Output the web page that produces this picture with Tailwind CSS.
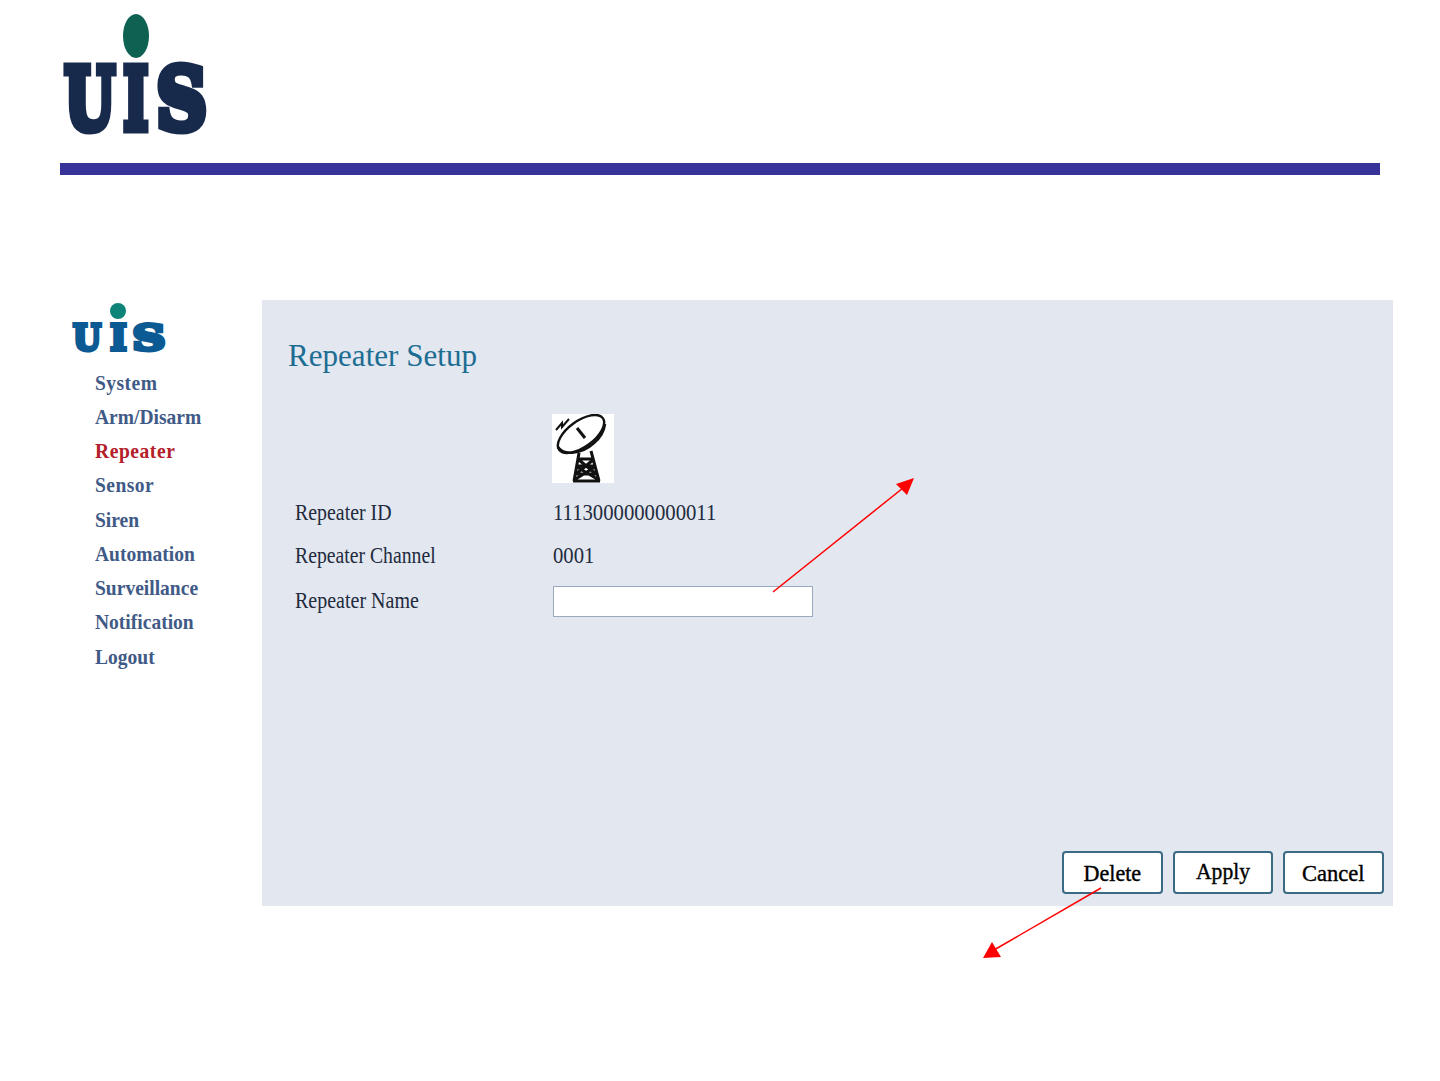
<!DOCTYPE html>
<html><head><meta charset="utf-8">
<script src="https://cdn.jsdelivr.net/npm/@tailwindcss/browser@4"></script>
<title>Repeater Setup</title></head>
<body class="bg-white">
<div class="relative w-[1440px] h-[1081px] overflow-hidden font-['Liberation_Serif',serif]">
  <header class="h-[163px] pl-[60px]">
    <svg width="150" height="140" viewBox="0 0 150 140" class="block overflow-visible">
      <ellipse cx="76" cy="36" rx="13" ry="22" fill="#0f6152"/>
      <g font-family="DejaVu Serif" font-weight="700" font-size="85" fill="#182a4c" stroke="#182a4c" stroke-width="9" stroke-linejoin="miter">
        <text transform="translate(4.5,128.5) scale(0.68,1)">U</text>
        <text transform="translate(63.5,128.5) scale(0.62,1)">I</text>
        <text transform="translate(96.5,128.5) scale(0.82,1)">S</text>
      </g>
    </svg>
  </header>
  <div class="ml-[60px] w-[1320px] h-3 bg-[#383399]"></div>
  <main class="flex mt-[125px] pl-[60px]">
    <aside class="w-[202px] shrink-0">
      <svg width="110" height="56" viewBox="0 0 110 56" class="block overflow-visible">
        <circle cx="58" cy="11" r="8" fill="#0e8377"/>
        <g font-family="DejaVu Serif" font-weight="700" font-size="35" fill="#0b5a94" stroke="#0b5a94" stroke-width="4" stroke-linejoin="miter">
          <text transform="translate(13,50) scale(0.92,1)">U</text>
          <text transform="translate(50.2,50) scale(1,1)">I</text>
          <text transform="translate(72.6,50) scale(1.3,1)">S</text>
        </g>
      </svg>
      <nav class="ml-[35px] mt-[9.5px] flex flex-col font-bold text-[21px] leading-[34.25px] text-[#3f5a86] [transform:scaleX(0.93)] origin-left">
        <a class="tracking-[0.5px]">System</a><a>Arm/Disarm</a><a class="text-[#b3202a] tracking-[0.6px]">Repeater</a><a class="tracking-[0.5px]">Sensor</a><a>Siren</a><a>Automation</a><a>Surveillance</a><a>Notification</a><a>Logout</a>
      </nav>
    </aside>
    <section class="relative w-[1131px] h-[606px] bg-[#e2e7f0] pl-[26px] pt-[35px] flex flex-col">
      <h1 class="text-[32px] leading-10 text-[#1d6d93] [transform:scaleX(0.971)] origin-left">Repeater Setup</h1>
      <div class="ml-[264px] mt-[39px] w-[62px] h-[69px] bg-white">
        <svg width="62" height="69" viewBox="0 0 62 69" fill="none" stroke="#111" stroke-width="2.4">
          <ellipse cx="29" cy="20" rx="27" ry="13" transform="rotate(-36 29 20)"/>
          <path d="M6 33 C11 42 30 40 42 29 C48 24 52 17 53 10" stroke-width="2.6"/>
          <path d="M25 14 L33 24" stroke-width="3"/>
          <path d="M4 16 L10 9 L10 13 L17 5" stroke-width="2"/>
          <path d="M27 39 L22 67 M39 37 L47 67 M26 45 H41 M25 52 H43 M23 60 H45 M21 67 H48 M27 46 L44 60 M41 46 L24 60 M25 53 L47 66 M43 53 L22 66" stroke-width="3"/>
        </svg>
      </div>
      <div class="ml-[7px] mt-[8px] grid grid-cols-[258px_1fr] text-[23px] text-[#222b3d] items-center">
        <div class="h-[44px] leading-[44px] [transform:scaleX(0.864)] origin-left">Repeater ID</div>
        <div class="h-[44px] leading-[44px] [transform:scaleX(0.9)] origin-left">1113000000000011</div>
        <div class="h-[42px] leading-[42px] [transform:scaleX(0.857)] origin-left">Repeater Channel</div>
        <div class="h-[42px] leading-[42px] [transform:scaleX(0.9)] origin-left">0001</div>
        <div class="h-[48px] leading-[48px] [transform:scaleX(0.87)] origin-left">Repeater Name</div>
        <div class="h-[48px] flex items-center"><input class="w-[260px] h-[31px] bg-white border border-[#9aa9bd]" aria-label="Repeater Name"></div>
      </div>
      <div class="absolute right-[9px] bottom-[12px] flex gap-[10px] text-[24px] text-black [-webkit-text-stroke:0.4px_black]">
        <button class="w-[101px] h-[43px] bg-white border-2 border-[#3b6a85] rounded-[4px] pt-px"><span class="inline-block [transform:scaleX(0.92)]">Delete</span></button>
        <button class="w-[100px] h-[43px] bg-white border-2 border-[#3b6a85] rounded-[4px] pb-[3px]"><span class="inline-block [transform:scaleX(0.9)]">Apply</span></button>
        <button class="w-[101px] h-[43px] bg-white border-2 border-[#3b6a85] rounded-[4px] pt-px"><span class="inline-block [transform:scaleX(0.94)]">Cancel</span></button>
      </div>
    </section>
  </main>
  <svg class="absolute left-0 top-0 pointer-events-none" width="1440" height="1081" viewBox="0 0 1440 1081">
    <path d="M773 592 L903 488" stroke="#ff0000" stroke-width="1.5"/>
    <path d="M914 478 L896 484 L907 495 Z" fill="#ff0000"/>
    <path d="M1101 888 L994 950" stroke="#ff0000" stroke-width="1.5"/>
    <path d="M983 958 L1001 957 L992 942 Z" fill="#ff0000"/>
  </svg>
</div>
</body></html>
